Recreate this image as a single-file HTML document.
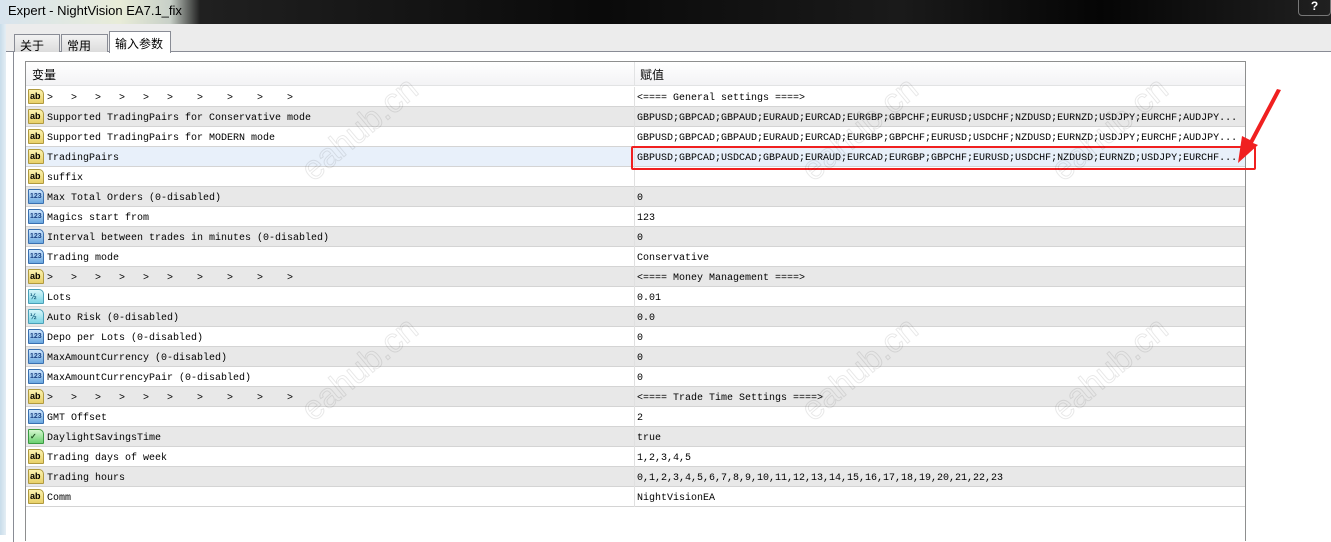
<!DOCTYPE html>
<html><head><meta charset="utf-8"><style>
*{margin:0;padding:0;box-sizing:border-box}
body{width:1331px;height:535px;overflow:hidden;background:#fff;position:relative;font-family:"Liberation Sans","Noto Sans CJK SC",sans-serif}
.title{position:absolute;left:0;top:0;width:1331px;height:24px;background:linear-gradient(90deg,#d8e4ee 0,#e8ecd8 120px,#c8d0c8 170px,#202020 200px,#0a0a0a 600px,#1a1a1a 900px,#050505 1100px,#202020 1331px);}
.title span{position:absolute;left:8px;top:3px;font-size:13px;color:#000}
.help{position:absolute;left:1298px;top:-2px;width:33px;height:18px;border:1px solid #777;border-radius:0 0 4px 4px;color:#fff;font-size:12px;font-weight:bold;text-align:center;line-height:14px}
.top{position:absolute;left:0;top:24px;width:1331px;height:28px;background:#ececec;border-bottom:1px solid #898c95}
.lstrip{position:absolute;left:0;top:24px;width:6px;height:511px;background:linear-gradient(90deg,#c8dcea,#e4eef4)}
.panel{position:absolute;left:13px;top:52px;width:1320px;height:490px;background:#fff;border-left:1px solid #898c95}
.tab{position:absolute;top:34px;height:18px;border:1px solid #898c95;border-bottom:none;background:linear-gradient(#f2f2f2,#dcdcdc);font-size:12px;padding:2px 5px 0}
.tab.act{top:31px;height:22px;background:#fff;z-index:2;padding-top:3px}
.grid{position:absolute;left:25px;top:61px;width:1221px;height:480px;border:1px solid #8e8f8f;border-bottom:none;background:#fff}
.hdr{position:absolute;left:0;top:0;width:1219px;height:24px;background:linear-gradient(#fff,#f3f3f5);border-bottom:1px solid #e2e3e4;font-size:12px}
.hdr span{position:absolute;top:4px}
.row{position:absolute;left:0;width:1219px;height:20px;border-bottom:1px solid #d4d4d4;font-family:"Liberation Mono",monospace;font-size:10px;color:#000;white-space:pre}
.row.g{background:#e8e8e8}.row.s{background:#e8f0fa}
.row .n{position:absolute;left:21px;top:6px}
.row .v{position:absolute;left:611px;top:6px}
.row .div{position:absolute;left:608px;top:0;width:1px;height:20px;background:#e0e0e0}
.ic{position:absolute;left:2px;top:2px;width:16px;height:15px;border:1px solid #b09a40;border-radius:1px 5px 1px 1px;font-family:"Liberation Sans",sans-serif;font-size:9px;font-weight:bold;line-height:13px;text-align:left;padding-left:1px}
.ab{background:linear-gradient(#fbf2b0,#e8d068)}
.n1{background:linear-gradient(#cfe6fb,#6aa8e0);border-color:#3a70b0;font-size:7px;color:#1a3f80}
.d{background:linear-gradient(#d8f6fa,#7bd4e4);border-color:#4aa0b8;color:#1a6080;font-size:8px}
.b{background:linear-gradient(#d6f7d0,#6cd070);border-color:#3a9a40;color:#205020;font-size:8px}
.red{position:absolute;left:631px;top:146px;width:625px;height:24px;border:2px solid #f02020;border-radius:2px}
.wm{position:absolute;font-size:34px;transform:rotate(-40deg);font-family:"Liberation Sans",sans-serif;-webkit-text-stroke:1px rgba(0,0,0,.09);color:transparent}
</style></head><body>
<div class="title"><span>Expert - NightVision EA7.1_fix</span><div class="help">?</div></div>
<div class="top"></div>
<div class="lstrip"></div>
<div class="panel"></div>
<div class="tab" style="left:14px;width:46px">关于</div>
<div class="tab" style="left:61px;width:47px">常用</div>
<div class="tab act" style="left:109px;width:62px">输入参数</div>
<div class="grid">
<div class="hdr"><span style="left:6px">变量</span><span style="left:614px">赋值</span><div style="position:absolute;left:608px;top:0;width:1px;height:24px;background:#e2e3e4"></div></div>
<div class="row" style="top:25px"><div class="ic ab">ab</div><span class="n">&gt;   &gt;   &gt;   &gt;   &gt;   &gt;    &gt;    &gt;    &gt;    &gt;</span><div class="div"></div><span class="v">&lt;==== General settings ====&gt;</span></div>
<div class="row g" style="top:45px"><div class="ic ab">ab</div><span class="n">Supported TradingPairs for Conservative mode</span><div class="div"></div><span class="v">GBPUSD;GBPCAD;GBPAUD;EURAUD;EURCAD;EURGBP;GBPCHF;EURUSD;USDCHF;NZDUSD;EURNZD;USDJPY;EURCHF;AUDJPY...</span></div>
<div class="row" style="top:65px"><div class="ic ab">ab</div><span class="n">Supported TradingPairs for MODERN mode</span><div class="div"></div><span class="v">GBPUSD;GBPCAD;GBPAUD;EURAUD;EURCAD;EURGBP;GBPCHF;EURUSD;USDCHF;NZDUSD;EURNZD;USDJPY;EURCHF;AUDJPY...</span></div>
<div class="row s" style="top:85px"><div class="ic ab">ab</div><span class="n">TradingPairs</span><div class="div"></div><span class="v">GBPUSD;GBPCAD;USDCAD;GBPAUD;EURAUD;EURCAD;EURGBP;GBPCHF;EURUSD;USDCHF;NZDUSD;EURNZD;USDJPY;EURCHF...</span></div>
<div class="row" style="top:105px"><div class="ic ab">ab</div><span class="n">suffix</span><div class="div"></div><span class="v"></span></div>
<div class="row g" style="top:125px"><div class="ic n1">123</div><span class="n">Max Total Orders (0-disabled)</span><div class="div"></div><span class="v">0</span></div>
<div class="row" style="top:145px"><div class="ic n1">123</div><span class="n">Magics start from</span><div class="div"></div><span class="v">123</span></div>
<div class="row g" style="top:165px"><div class="ic n1">123</div><span class="n">Interval between trades in minutes (0-disabled)</span><div class="div"></div><span class="v">0</span></div>
<div class="row" style="top:185px"><div class="ic n1">123</div><span class="n">Trading mode</span><div class="div"></div><span class="v">Conservative</span></div>
<div class="row g" style="top:205px"><div class="ic ab">ab</div><span class="n">&gt;   &gt;   &gt;   &gt;   &gt;   &gt;    &gt;    &gt;    &gt;    &gt;</span><div class="div"></div><span class="v">&lt;==== Money Management ====&gt;</span></div>
<div class="row" style="top:225px"><div class="ic d">½</div><span class="n">Lots</span><div class="div"></div><span class="v">0.01</span></div>
<div class="row g" style="top:245px"><div class="ic d">½</div><span class="n">Auto Risk (0-disabled)</span><div class="div"></div><span class="v">0.0</span></div>
<div class="row" style="top:265px"><div class="ic n1">123</div><span class="n">Depo per Lots (0-disabled)</span><div class="div"></div><span class="v">0</span></div>
<div class="row g" style="top:285px"><div class="ic n1">123</div><span class="n">MaxAmountCurrency (0-disabled)</span><div class="div"></div><span class="v">0</span></div>
<div class="row" style="top:305px"><div class="ic n1">123</div><span class="n">MaxAmountCurrencyPair (0-disabled)</span><div class="div"></div><span class="v">0</span></div>
<div class="row g" style="top:325px"><div class="ic ab">ab</div><span class="n">&gt;   &gt;   &gt;   &gt;   &gt;   &gt;    &gt;    &gt;    &gt;    &gt;</span><div class="div"></div><span class="v">&lt;==== Trade Time Settings ====&gt;</span></div>
<div class="row" style="top:345px"><div class="ic n1">123</div><span class="n">GMT Offset</span><div class="div"></div><span class="v">2</span></div>
<div class="row g" style="top:365px"><div class="ic b">✓</div><span class="n">DaylightSavingsTime</span><div class="div"></div><span class="v">true</span></div>
<div class="row" style="top:385px"><div class="ic ab">ab</div><span class="n">Trading days of week</span><div class="div"></div><span class="v">1,2,3,4,5</span></div>
<div class="row g" style="top:405px"><div class="ic ab">ab</div><span class="n">Trading hours</span><div class="div"></div><span class="v">0,1,2,3,4,5,6,7,8,9,10,11,12,13,14,15,16,17,18,19,20,21,22,23</span></div>
<div class="row" style="top:425px"><div class="ic ab">ab</div><span class="n">Comm</span><div class="div"></div><span class="v">NightVisionEA</span></div>
</div>
<div class="red"></div>
<svg style="position:absolute;left:0;top:0" width="1331" height="535"><path d="M1281 90 L1277 89 L1250 140 L1242 136 L1238 163 L1258 145 L1253 143 Z" fill="#f02020"/></svg>
<div class="wm" style="left:290px;top:110px">eahub.cn</div>
<div class="wm" style="left:790px;top:110px">eahub.cn</div>
<div class="wm" style="left:1040px;top:110px">eahub.cn</div>
<div class="wm" style="left:290px;top:350px">eahub.cn</div>
<div class="wm" style="left:790px;top:350px">eahub.cn</div>
<div class="wm" style="left:1040px;top:350px">eahub.cn</div>
</body></html>
